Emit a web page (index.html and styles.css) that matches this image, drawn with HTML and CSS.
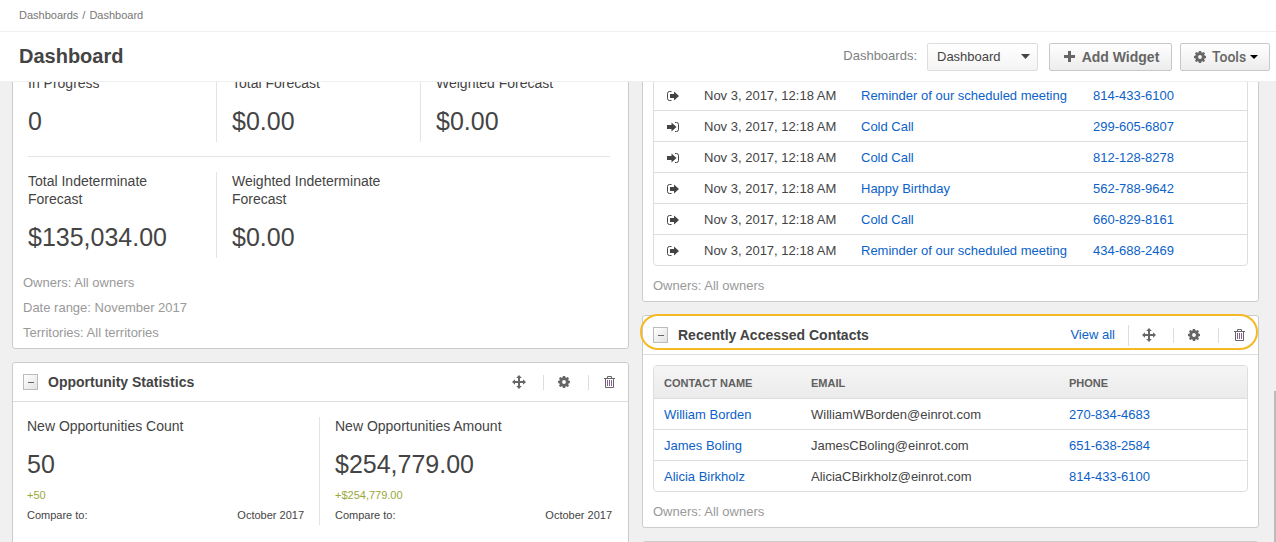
FILE: index.html
```html
<!DOCTYPE html>
<html lang="en">
<head>
<meta charset="utf-8">
<title>Dashboard</title>
<link rel="stylesheet" href="styles.css">
</head>
<body>
<svg class="sprite" aria-hidden="true">
  <symbol id="i-move" viewBox="0 0 14 14"><path d="M7 0l2.800 3H8v3h3V4.200L14 7l-3 2.800V8H8v3h1.800L7 14l-2.800-3H6V8H3v1.800L0 7l3-2.800V6h3V3H4.200z"/></symbol>
  <symbol id="i-gear" viewBox="0 0 12 12"><path fill-rule="evenodd" d="M4.900 0h2.200l.35 1.500 .8.350L9.700 1l1.300 1.300-.85 1.450.35.800L12 4.900v2.200l-1.500.35-.35.800L11 9.700 9.700 11l-1.450-.85-.8.350L7.100 12H4.900l-.35-1.500-.8-.35L2.300 11 1 9.700l.85-1.450-.35-.8L0 7.100V4.900l1.500-.35.35-.8L1 2.300 2.300 1l1.450.85.800-.35zM6 4.100a1.900 1.900 0 1 0 0 3.800 1.900 1.900 0 0 0 0-3.800z"/></symbol>
  <symbol id="i-trash" viewBox="0 0 11 12"><path fill="none" stroke="#666" d="M0 2.500h11M3.500 2.500v-2h4v2M1.500 2.500v9h8v-9"/><path fill="none" stroke="#8b5f93" d="M3.500 4v6M5.500 4v6M7.500 4v6"/></symbol>
  <symbol id="i-out" viewBox="0 0 12 10"><path fill="none" stroke="currentColor" d="M4.500 .500h-2a2 2 0 0 0-2 2v5a2 2 0 0 0 2 2h2"/><path d="M7 .500L12 5 7 9.500V7H3V3h4z"/></symbol>
  <symbol id="i-in" viewBox="0 0 12 10"><path fill="none" stroke="currentColor" d="M8 .500h1.500a2 2 0 0 1 2 2v5a2 2 0 0 1-2 2H8"/><path d="M4.500 .500L9.500 5l-5 4.500V7H0V3h4.500z"/></symbol>
</svg>

<nav class="crumbs" aria-label="Breadcrumb"><a href="#">Dashboards</a><span>/</span><a href="#">Dashboard</a></nav>

<header class="topbar">
  <h1 class="page-title">Dashboard</h1>
  <label class="picker-label" for="picker">Dashboards:</label>
  <div class="picker">
    <select id="picker"><option>Dashboard</option></select>
    <svg class="picker-arrow" viewBox="0 0 9 5" aria-hidden="true"><path d="M0 0h9L4.500 5z"/></svg>
  </div>
  <button class="btn btn-add" type="button"><svg class="plus" viewBox="0 0 11 11" aria-hidden="true"><path d="M4 0h3v4h4v3H7v4H4V7H0V4h4z"/></svg>Add Widget</button>
  <button class="btn btn-tools" type="button"><svg class="gear" aria-hidden="true"><use href="#i-gear"/></svg><span>Tools</span><svg class="caret" viewBox="0 0 8 4" aria-hidden="true"><path d="M0 0h8L4 4z"/></svg></button>
</header>

<main class="board">
  <div class="column">
    <section class="card">
      <div class="stats three">
        <div class="stat"><div class="label">In Progress</div><div class="value">0</div></div>
        <div class="stat"><div class="label">Total Forecast</div><div class="value">$0.00</div></div>
        <div class="stat"><div class="label">Weighted Forecast</div><div class="value">$0.00</div></div>
      </div>
      <hr class="rule">
      <div class="stats three">
        <div class="stat"><div class="label">Total Indeterminate Forecast</div><div class="value">$135,034.00</div></div>
        <div class="stat"><div class="label">Weighted Indeterminate Forecast</div><div class="value">$0.00</div></div>
      </div>
      <div class="notes"><div>Owners: All owners</div><div>Date range: November 2017</div><div>Territories: All territories</div></div>
    </section>

    <section class="card">
      <div class="card-head">
        <button class="collapse" type="button" aria-label="Collapse"></button>
        <h2>Opportunity Statistics</h2>
        <div class="tools">
          <button class="tool plain" type="button" aria-label="Move"><svg class="move"><use href="#i-move"/></svg></button>
          <button class="tool" type="button" aria-label="Settings"><svg class="gear"><use href="#i-gear"/></svg></button>
          <button class="tool" type="button" aria-label="Delete"><svg class="trash"><use href="#i-trash"/></svg></button>
        </div>
      </div>
      <div class="stats two">
        <div class="stat"><div class="label">New Opportunities Count</div><div class="value">50</div><div class="delta">+50</div><div class="compare"><span>Compare to:</span><span>October 2017</span></div></div>
        <div class="stat"><div class="label">New Opportunities Amount</div><div class="value">$254,779.00</div><div class="delta">+$254,779.00</div><div class="compare"><span>Compare to:</span><span>October 2017</span></div></div>
      </div>
    </section>
  </div>

  <div class="column">
    <section class="card calls">
      <div class="grid-box">
        <table>
          <colgroup><col class="c-icon"><col class="c-date"><col class="c-subject"><col></colgroup>
          <tbody>
            <tr><td><svg class="dir"><use href="#i-out"/></svg></td><td>Nov 3, 2017, 12:18 AM</td><td><a href="#">Reminder of our scheduled meeting</a></td><td><a href="#">814-433-6100</a></td></tr>
            <tr><td><svg class="dir"><use href="#i-in"/></svg></td><td>Nov 3, 2017, 12:18 AM</td><td><a href="#">Cold Call</a></td><td><a href="#">299-605-6807</a></td></tr>
            <tr><td><svg class="dir"><use href="#i-in"/></svg></td><td>Nov 3, 2017, 12:18 AM</td><td><a href="#">Cold Call</a></td><td><a href="#">812-128-8278</a></td></tr>
            <tr><td><svg class="dir"><use href="#i-out"/></svg></td><td>Nov 3, 2017, 12:18 AM</td><td><a href="#">Happy Birthday</a></td><td><a href="#">562-788-9642</a></td></tr>
            <tr><td><svg class="dir"><use href="#i-out"/></svg></td><td>Nov 3, 2017, 12:18 AM</td><td><a href="#">Cold Call</a></td><td><a href="#">660-829-8161</a></td></tr>
            <tr><td><svg class="dir"><use href="#i-out"/></svg></td><td>Nov 3, 2017, 12:18 AM</td><td><a href="#">Reminder of our scheduled meeting</a></td><td><a href="#">434-688-2469</a></td></tr>
          </tbody>
        </table>
      </div>
      <div class="notes">Owners: All owners</div>
    </section>

    <section class="card">
      <div class="card-head highlighted">
        <button class="collapse" type="button" aria-label="Collapse"></button>
        <h2>Recently Accessed Contacts</h2>
        <a class="view-all" href="#">View all</a>
        <div class="tools">
          <button class="tool tall" type="button" aria-label="Move"><svg class="move"><use href="#i-move"/></svg></button>
          <button class="tool" type="button" aria-label="Settings"><svg class="gear"><use href="#i-gear"/></svg></button>
          <button class="tool" type="button" aria-label="Delete"><svg class="trash"><use href="#i-trash"/></svg></button>
        </div>
      </div>
      <div class="grid-box contacts">
        <table>
          <colgroup><col class="c-name"><col class="c-email"><col></colgroup>
          <thead><tr><th scope="col">CONTACT NAME</th><th scope="col">EMAIL</th><th scope="col">PHONE</th></tr></thead>
          <tbody>
            <tr><td><a href="#">William Borden</a></td><td>WilliamWBorden@einrot.com</td><td><a href="#">270-834-4683</a></td></tr>
            <tr><td><a href="#">James Boling</a></td><td>JamesCBoling@einrot.com</td><td><a href="#">651-638-2584</a></td></tr>
            <tr><td><a href="#">Alicia Birkholz</a></td><td>AliciaCBirkholz@einrot.com</td><td><a href="#">814-433-6100</a></td></tr>
          </tbody>
        </table>
      </div>
      <div class="notes">Owners: All owners</div>
    </section>

    <section class="card next"></section>
  </div>
  <div class="scroll-thumb"></div>
</main>
</body>
</html>
```
FILE: styles.css
```css
* { box-sizing: border-box; }

body {
  margin: 0;
  height: 100vh;
  display: flex;
  flex-direction: column;
  overflow: hidden;
  background: #fff;
  color: #444;
  font: 13px/18px "Liberation Sans", Arial, sans-serif;
}

a { color: #0b62c8; text-decoration: none; }
h1, h2 { margin: 0; }
svg { display: block; fill: currentColor; flex: none; }
button { font: inherit; color: inherit; padding: 0; }
.sprite { position: absolute; width: 0; height: 0; }

.crumbs {
  flex: none;
  display: flex;
  gap: 4px;
  padding: 6px 19px 7px;
  border-bottom: 1px solid #efefef;
  color: #777;
  font-size: 11px;
}
.crumbs a { color: inherit; }

.topbar {
  flex: none;
  display: flex;
  align-items: center;
  height: 50px;
  padding: 0 6px 0 19px;
  border-bottom: 1px solid #efefef;
}
.page-title { margin-right: auto; padding-bottom: 2px; font-size: 20px; line-height: 24px; }
.picker-label { margin-right: 10px; padding-bottom: 2px; color: #808080; font-size: 13px; }
.picker { position: relative; width: 111px; margin-right: 11px; }
.picker select {
  appearance: none;
  display: block;
  width: 100%;
  height: 28px;
  padding: 0 24px 0 9px;
  border: 1px solid #ddd;
  border-radius: 2px;
  background: linear-gradient(#fff, #f4f4f4);
  color: #444;
  font: 13px "Liberation Sans", Arial, sans-serif;
}
.picker-arrow { position: absolute; right: 8px; top: 11px; width: 9px; height: 5px; pointer-events: none; }

.btn {
  display: flex;
  align-items: center;
  justify-content: center;
  height: 28px;
  border: 1px solid #c8c8c8;
  border-radius: 2px;
  background: linear-gradient(#fff, #ececec);
  color: #666;
  font-size: 14px;
  font-weight: bold;
}
.btn-add { width: 123px; gap: 7px; margin-right: 8px; padding-left: 2px; }
.btn-tools { width: 90px; gap: 6px; padding-left: 2px; font-family: Roboto, sans-serif; font-weight: 500; }
.btn-tools .caret { color: #000; margin-left: -2px; }
.plus { width: 11px; height: 11px; }
.caret { width: 8px; height: 4px; }

.board {
  position: relative;
  flex: 1;
  min-height: 0;
  overflow: hidden;
  display: grid;
  grid-template-columns: 1fr 1fr;
  align-items: start;
  gap: 13px;
  padding: 0 17px 0 12px;
  background: #f0f0f0;
}
.scroll-thumb { position: absolute; right: 0; top: 309px; bottom: 0; width: 2px; background: #bbb; }

.column { display: flex; flex-direction: column; gap: 13px; margin-top: -9px; min-width: 0; }

.card { border: 1px solid #ccc; border-radius: 3px; background: #fff; }
.card.calls { padding-top: 5px; }
.card.next { height: 60px; }

.card-head {
  display: flex;
  align-items: center;
  gap: 10px;
  height: 39px;
  padding: 0 12px 0 10px;
  border-bottom: 1px solid #ddd;
}
.card-head h2 { margin-right: auto; font-size: 14px; line-height: 18px; }
.card-head.highlighted { position: relative; }
.card-head.highlighted::after {
  content: "";
  position: absolute;
  inset: -2px 0 4px -3px;
  border: 2px solid #f4b924;
  border-radius: 20px;
  pointer-events: none;
}
.collapse {
  display: grid;
  place-items: center;
  width: 15px;
  height: 16px;
  border: 1px solid #bbb;
  background: linear-gradient(135deg, #fff, #e2e2e2);
}
.collapse::before { content: ""; width: 6px; height: 1px; background: #666; }
.view-all { margin-right: 3px; }

.tools { display: flex; align-items: center; gap: 17px; color: #666; }
.tool {
  display: flex;
  align-items: center;
  justify-content: center;
  width: 28px;
  height: 15px;
  padding-left: 13px;
  border: 0;
  border-left: 1px solid #ddd;
  background: none;
}
.tool.plain { border-left-color: transparent; }
.tool.tall { height: 21px; }
.move { width: 14px; height: 14px; }
.gear { width: 12px; height: 12px; }
.trash { width: 11px; height: 12px; }
.dir { width: 12px; height: 10px; margin-left: 3px; }

.stats { display: grid; column-gap: 15px; }
.three { grid-template-columns: repeat(3, 1fr); padding: 0 3px 0 15px; }
.two { grid-template-columns: 1fr 1fr; padding: 15px 0 30px 14px; }
.stat { padding: 0 15px 6px 0; border-right: 1px solid #e4e4e4; }
.stat:last-child { border-color: transparent; }
.three + .notes { margin-top: 12px; }
.two .stat { padding-bottom: 0; }
.label { font-size: 14px; }
.value { margin-top: 14px; font-size: 25px; line-height: 30px; }
.rule { height: 1px; margin: 14px 18px 15px 15px; border: 0; background: #e4e4e4; }
.delta { margin-top: 6px; color: #98a839; font-size: 11px; line-height: 20px; }
.compare { display: flex; justify-content: space-between; font-size: 11px; line-height: 20px; }

.grid-box { margin: 0 10px 7px; border: 1px solid #ddd; border-radius: 4px; overflow: hidden; }
.grid-box.contacts { margin-top: 10px; }
table { width: 100%; table-layout: fixed; border-collapse: separate; border-spacing: 0; }
th, td { padding: 2px 10px 0; border-bottom: 1px solid #ddd; text-align: left; white-space: nowrap; }
th { height: 33px; background: linear-gradient(#f5f5f5, #ebebeb); color: #606060; font-size: 11px; }
td { height: 31px; }
tr:last-child td { height: 30px; border-bottom: 0; }
.c-icon { width: 40px; }
.c-date { width: 157px; }
.c-subject { width: 232px; }
.c-name { width: 147px; }
.c-email { width: 258px; }

.notes { padding: 0 10px 3px; color: #999; line-height: 25px; }
```
